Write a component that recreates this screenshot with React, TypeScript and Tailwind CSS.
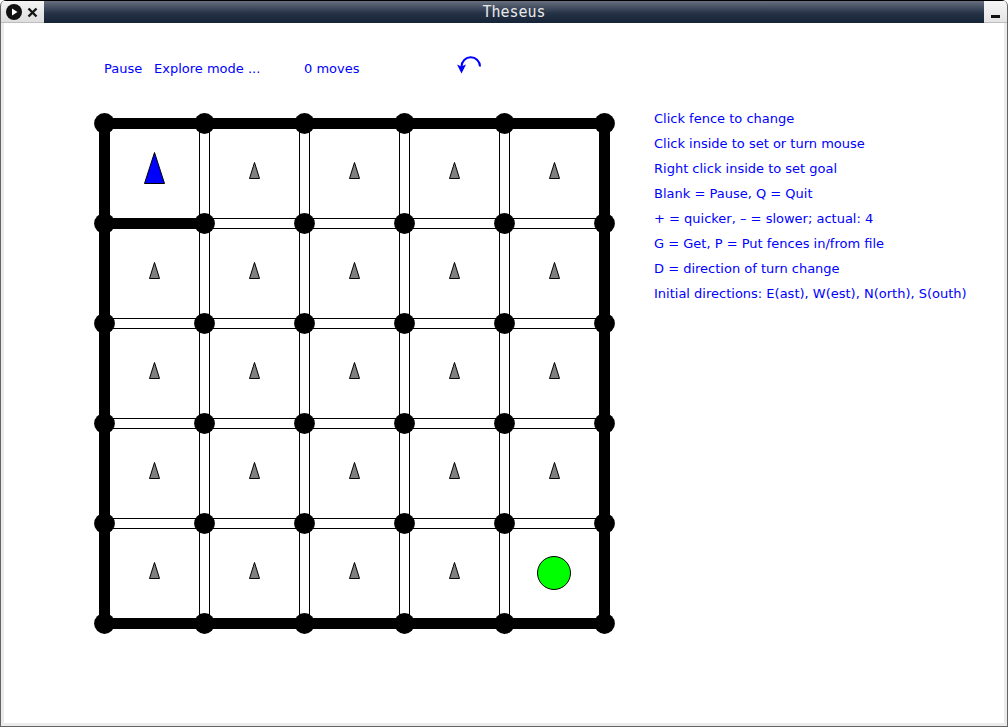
const CELL = 100;
const SIZE = 5;
const ORIGIN = 10.5;
const indices = [0, 1, 2, 3, 4];
const posts = [0, 1, 2, 3, 4, 5];

const help = [
  "Click fence to change",
  "Click inside to set or turn mouse",
  "Right click inside to set goal",
  "Blank = Pause, Q = Quit",
  "+ = quicker, – = slower; actual: 4",
  "G = Get, P = Put fences in/from file",
  "D = direction of turn change",
  "Initial directions: E(ast), W(est), N(orth), S(outh)",
];

function Fence({ x, y, vertical, closed }: { x: number; y: number; vertical: boolean; closed: boolean }) {
  const cx = ORIGIN + x * CELL;
  const cy = ORIGIN + y * CELL;
  return (
    <rect
      x={vertical ? cx - 5 : cx}
      y={vertical ? cy : cy - 5}
      width={vertical ? 10 : CELL}
      height={vertical ? CELL : 10}
      fill={closed ? "#000" : "#fff"}
      stroke="#000"
    />
  );
}

function Board() {
  return (
    <svg width="521" height="521" viewBox="0 0 521 521" role="img" aria-label="Maze board" className="block">
      {posts.map((p) =>
        indices.map((i) => (
          <g key={`${p}-${i}`}>
            <Fence x={i} y={p} vertical={false} closed={p === 0 || p === SIZE || (p === 1 && i === 0)} />
            <Fence x={p} y={i} vertical closed={p === 0 || p === SIZE} />
          </g>
        )),
      )}
      {posts.map((y) =>
        posts.map((x) => (
          <circle key={`${x}-${y}`} cx={ORIGIN + x * CELL} cy={ORIGIN + y * CELL} r="10.4" />
        )),
      )}
      {indices.map((y) =>
        indices.map((x) => {
          const mx = x * CELL + 60.5;
          const my = y * CELL;
          if (x === 4 && y === 4) {
            return <circle key="goal" cx="460" cy="460" r="16.5" fill="#00ff00" stroke="#000" />;
          }
          if (x === 0 && y === 0) {
            return <path key="mouse" d="M60.5 39.5 L70.5 70.5 H50.5 Z" fill="#0000ff" stroke="#000" strokeLinejoin="bevel" />;
          }
          return (
            <path
              key={`${x}-${y}`}
              d={`M${mx} ${my + 49.5} L${mx + 5} ${my + 65.5} H${mx - 5} Z`}
              fill="#808080"
              stroke="#000"
              strokeLinejoin="bevel"
            />
          );
        }),
      )}
    </svg>
  );
}

export default function App() {
  return (
    <div className="flex min-h-screen flex-col overflow-hidden rounded-t-md border-x border-b border-[#646464] bg-[#ebebeb]">
      <header className="flex h-[23px] border-t border-black bg-linear-to-b from-[#68707f] via-[#263347] via-55% to-[#162438]">
        <div className="flex w-[43px] items-center gap-1 border-b border-[#bdbdbd] bg-linear-to-b from-[#f4f4f4] to-[#dedede] pl-[5px]">
          <button aria-label="Window menu" className="block">
            <svg width="16" height="16" viewBox="0 0 16 16">
              <circle cx="8" cy="8" r="8" fill="#111" />
              <path d="M6 4.5 L11.5 8 L6 11.5 Z" fill="#fff" />
            </svg>
          </button>
          <button aria-label="Close" className="block">
            <svg width="14" height="14" viewBox="0 0 14 14">
              <path d="M2.5 3.5 L10.5 11.5 M10.5 3.5 L2.5 11.5" stroke="#151515" strokeWidth="2.4" />
            </svg>
          </button>
        </div>
        <h1 className="flex-1 text-center font-['DejaVu_Sans_Mono',monospace] text-[15px] leading-[22px] text-[#e8e8e8]">
          Theseus
        </h1>
        <div className="flex w-[23px] border-b border-[#bdbdbd] bg-linear-to-b from-[#f6f6f6] to-[#e4e4e4] pl-[6px]">
          <button aria-label="Minimize" className="block">
            <svg width="11" height="22" viewBox="0 0 11 22">
              <rect x="1" y="14" width="9" height="3" fill="#111" />
            </svg>
          </button>
        </div>
      </header>
      <main className="mr-[3px] mb-[3px] ml-[3px] flex flex-1 gap-[39px] bg-white pt-[33px] pl-[90px] font-['DejaVu_Sans',sans-serif] text-[13px] leading-[25px] whitespace-nowrap text-[#0000ff]">
        <section className="flex flex-col gap-8">
          <div className="grid grid-cols-[50px_150px_150px_auto] pl-[10px]">
            <span>Pause</span>
            <span>Explore mode ...</span>
            <span>0 moves</span>
            <svg width="30" height="25" viewBox="0 0 30 25" role="img" aria-label="Counterclockwise" fill="none">
              <path d="M7.5 12 V10.5 A9.2 9.2 0 0 1 26 10.5" stroke="#0000ff" strokeWidth="2" />
              <path d="M3 8.5 L7.3 10.5 L12 8.5 L7.5 17.5 Z" fill="#0000ff" />
            </svg>
          </div>
          <Board />
        </section>
        <ul className="pt-[50px]">
          {help.map((line) => (
            <li key={line}>{line}</li>
          ))}
        </ul>
      </main>
    </div>
  );
}
